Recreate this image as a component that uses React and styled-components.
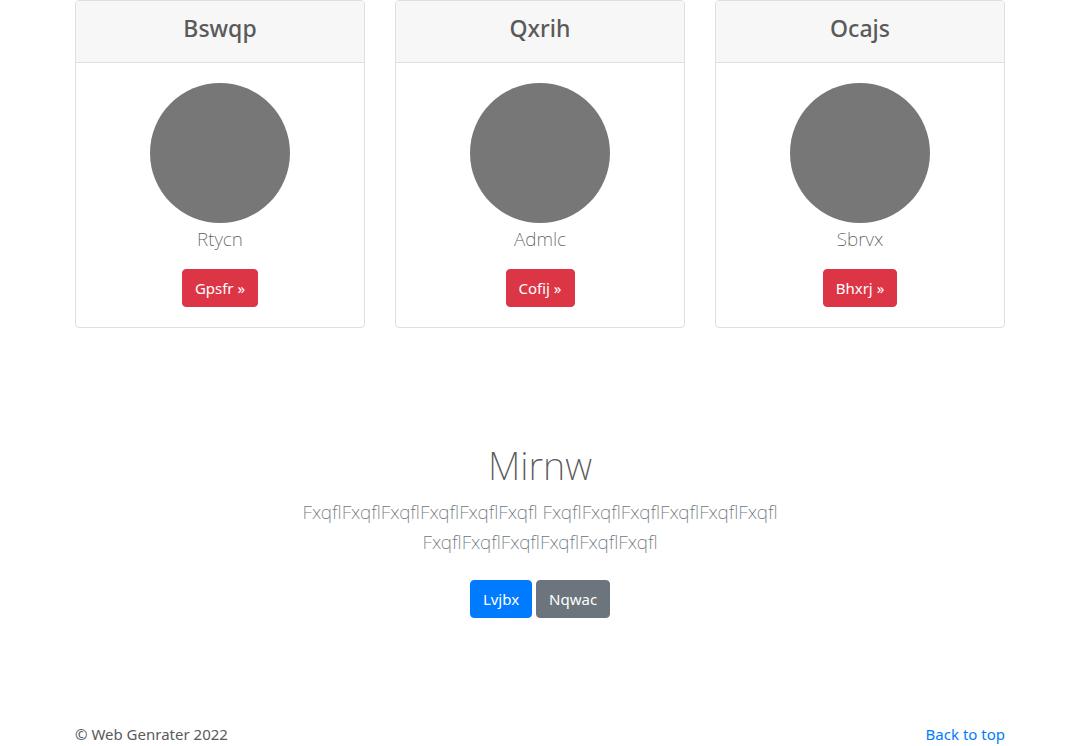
import React from "react";
import styled, { createGlobalStyle } from "styled-components";

const Global = createGlobalStyle`
  *, *::before, *::after { box-sizing: border-box; }
  body {
    margin: 0;
    background: #fff;
    color: #5a5a5a;
    font: 400 15px/24px "Noto Sans", "Open Sans", sans-serif;
  }
`;

const Container = styled.div`
  max-width: 960px;
  margin: 0 auto;
  padding: 0 15px;
`;

const Deck = styled.section`
  display: grid;
  grid-template-columns: repeat(3, 1fr);
  gap: 30px;
  text-align: center;
`;

const Card = styled.article`
  border: 1px solid #dfdfdf;
  border-radius: 4px;
  overflow: hidden;
`;

const CardHeader = styled.header`
  padding: 12px 20px;
  background: #f7f7f7;
  border-bottom: 1px solid #dfdfdf;
`;

const CardTitle = styled.h2`
  margin: 0 0 6px;
  font-size: 23px;
  line-height: 31px;
  font-weight: 500;
`;

const CardBody = styled.div`
  display: flex;
  flex-direction: column;
  align-items: center;
  padding: 20px;
`;

const Avatar = styled.div`
  width: 140px;
  height: 140px;
  border-radius: 50%;
  background: #777;
`;

const CardText = styled.p`
  margin: 0 0 14px;
  font-size: 19px;
  line-height: 32px;
  font-weight: 200;
`;

const tones = { danger: "#dc3545", primary: "#007bff", secondary: "#6c757d" };

const Button = styled.button`
  padding: 6px 12px;
  border: 1px solid ${({ $tone }) => tones[$tone]};
  border-radius: 4px;
  background: ${({ $tone }) => tones[$tone]};
  color: #fff;
  font: inherit;
  cursor: pointer;
`;

const Hero = styled.section`
  display: flex;
  flex-direction: column;
  align-items: center;
  padding: 113px 15px 96px;
  text-align: center;
`;

const HeroTitle = styled.h1`
  margin: 0 0 8px;
  font-size: 38px;
  line-height: 48px;
  font-weight: 200;
`;

const HeroText = styled.p`
  max-width: 500px;
  margin: 0 0 23px;
  font-size: 19px;
  line-height: 30px;
  font-weight: 200;
  color: #6c757d;
`;

const Actions = styled.div`
  display: flex;
  gap: 4px;
`;

const Footer = styled.footer`
  display: flex;
  justify-content: space-between;
  padding: 8px 0 0;
`;

const TopLink = styled.a`
  color: #007bff;
  text-decoration: none;
`;

const cards = [
  { title: "Bswqp", text: "Rtycn", action: "Gpsfr »" },
  { title: "Qxrih", text: "Admlc", action: "Cofij »" },
  { title: "Ocajs", text: "Sbrvx", action: "Bhxrj »" },
];

export default function App() {
  return (
    <>
      <Global />
      <Container>
        <Deck>
          {cards.map((card) => (
            <Card key={card.title}>
              <CardHeader>
                <CardTitle>{card.title}</CardTitle>
              </CardHeader>
              <CardBody>
                <Avatar />
                <CardText>{card.text}</CardText>
                <Button $tone="danger">{card.action}</Button>
              </CardBody>
            </Card>
          ))}
        </Deck>
        <Hero>
          <HeroTitle>Mirnw</HeroTitle>
          <HeroText>
            FxqflFxqflFxqflFxqflFxqflFxqfl FxqflFxqflFxqflFxqflFxqflFxqfl
            {" "}FxqflFxqflFxqflFxqflFxqflFxqfl
          </HeroText>
          <Actions>
            <Button $tone="primary">Lvjbx</Button>
            <Button $tone="secondary">Nqwac</Button>
          </Actions>
        </Hero>
        <Footer>
          <span>© Web Genrater 2022</span>
          <TopLink href="#">Back to top</TopLink>
        </Footer>
      </Container>
    </>
  );
}
